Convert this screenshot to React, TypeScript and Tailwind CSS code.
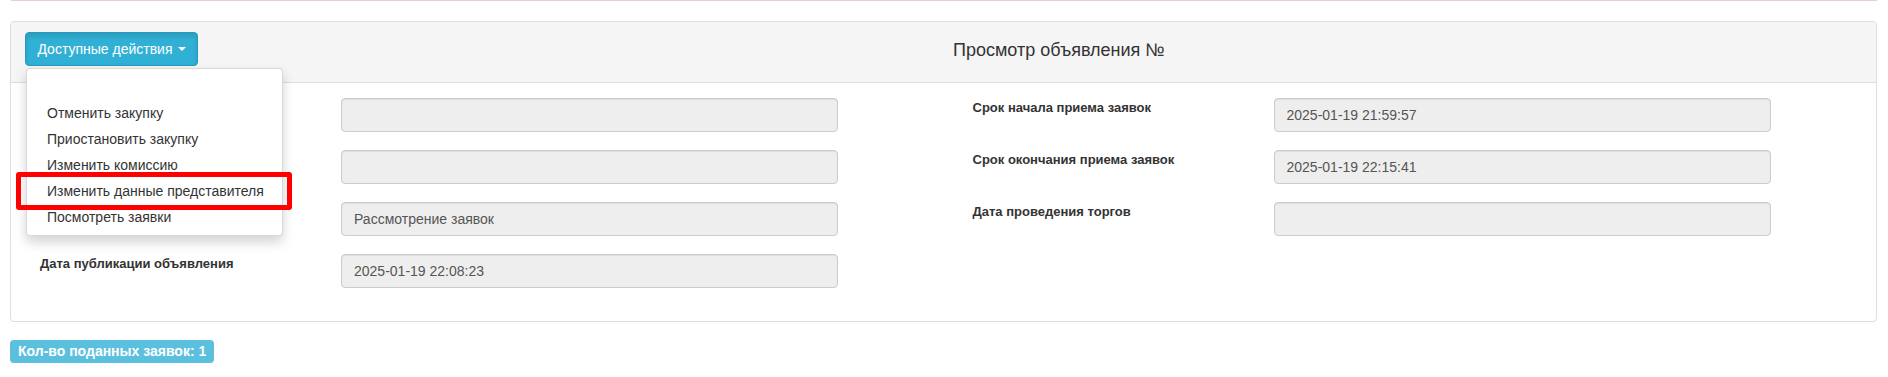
import React from "react";

const leftRows = [
  { label: "", value: "" },
  { label: "", value: "" },
  { label: "", value: "Рассмотрение заявок" },
  { label: "Дата публикации объявления", value: "2025-01-19 22:08:23" },
];

const rightRows = [
  { label: "Срок начала приема заявок", value: "2025-01-19 21:59:57" },
  { label: "Срок окончания приема заявок", value: "2025-01-19 22:15:41" },
  { label: "Дата проведения торгов", value: "" },
];

const actions = [
  "",
  "Отменить закупку",
  "Приостановить закупку",
  "Изменить комиссию",
  "Изменить данные представителя",
  "Посмотреть заявки",
];

function Field({ value }: { value: string }) {
  return (
    <div className="h-[34px] w-[497px] rounded-[4px] border border-[#cccccc] bg-[#eeeeee] px-[12px] flex items-center text-[14px] text-[#555555] shadow-[inset_0_1px_1px_rgba(0,0,0,0.075)]">
      {value}
    </div>
  );
}

function Column({ rows }: { rows: { label: string; value: string }[] }) {
  return (
    <div className="w-[934px] pl-[29px] flex flex-col gap-[18px]">
      {rows.map((r, i) => (
        <div key={i} className="flex">
          <div className="w-[301px] text-[13px] font-bold leading-[18px] pt-[1px]">{r.label}</div>
          <Field value={r.value} />
        </div>
      ))}
    </div>
  );
}

export default function App() {
  return (
    <div className="w-[1888px] h-[377px] bg-white text-[#333333] font-['Liberation_Sans',Arial,sans-serif]">
      <div className="mx-[11px] h-px bg-[#ebccd1]" />

      <div className="mt-[20px] ml-[10px] mr-[11px] rounded-[4px] border border-[#dddddd] bg-white">
        <div className="h-[61px] bg-[#f5f5f5] border-b border-[#dddddd] rounded-t-[4px] pl-[14px] pt-[10px] flex items-start">
          <div className="relative">
            <button className="h-[34px] w-[173px] px-[11px] rounded-[4px] border border-[#269abc] bg-[#31b0d5] text-white text-[14px] whitespace-nowrap flex items-center justify-center shadow-[inset_0_3px_5px_rgba(0,0,0,0.125)]">
              Доступные действия
              <span className="ml-[5px] inline-block w-0 h-0 border-t-[4px] border-t-white border-x-[4px] border-x-transparent" />
            </button>

            <div className="absolute left-[1px] top-[36px] z-10 w-[257px] rounded-[4px] border border-[rgba(0,0,0,0.15)] bg-white py-[5px] shadow-[0_6px_12px_rgba(0,0,0,0.175)]">
              {actions.map((a, i) => (
                <div key={i} className="h-[26px] px-[20px] flex items-center text-[14px] text-[#333333] whitespace-nowrap">
                  {a}
                </div>
              ))}
              <div className="absolute left-[-11px] top-[103px] w-[276px] h-[38px] rounded-[3px] border-[5px] border-[#ff0000]" />
            </div>
          </div>

          <h4 className="ml-[755px] mt-[8px] text-[18px] leading-[20px] text-[#333333] whitespace-nowrap">
            Просмотр объявления №
          </h4>
        </div>

        <div className="pt-[15px] pb-[33px] flex">
          <Column rows={leftRows} />
          <Column rows={rightRows} />
        </div>
      </div>

      <div className="mt-[17px] ml-[10px]">
        <span className="inline-flex h-[23px] items-center rounded-[4px] bg-[#5bc0de] px-[8px] text-[14px] font-bold text-white">
          Кол-во поданных заявок: 1
        </span>
      </div>
    </div>
  );
}
